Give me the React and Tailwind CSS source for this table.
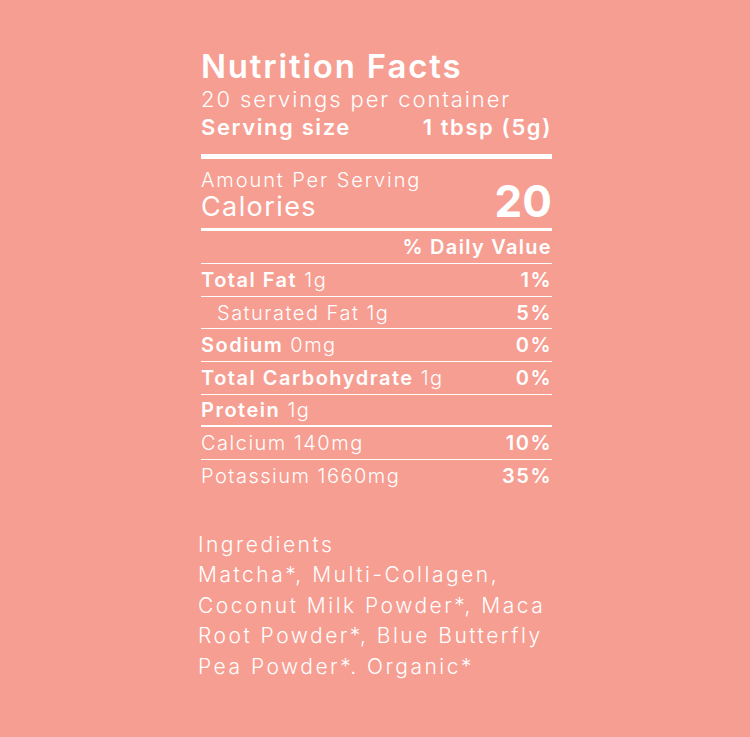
// Nutrition facts label on a salmon panel.

const rows = [
  { bold: 'Total Fat', rest: ' 1g', dv: '1%' },
  { bold: '', rest: 'Saturated Fat 1g', dv: '5%', indent: true },
  { bold: 'Sodium', rest: ' 0mg', dv: '0%' },
  { bold: 'Total Carbohydrate', rest: ' 1g', dv: '0%' },
  { bold: 'Protein', rest: ' 1g', dv: '', thick: true },
  { bold: '', rest: 'Calcium 140mg', dv: '10%' },
  { bold: '', rest: 'Potassium 1660mg', dv: '35%', last: true },
];

export default function App() {
  return (
    <div className="min-h-[737px] w-[750px] bg-[#f69e92] text-white font-['Inter',sans-serif]">
      <div className="pl-[201px] pt-[46px]">
        <div className="w-[351px]">
          <h1 className="text-[33px] leading-[40px] font-semibold tracking-[1.8px]">Nutrition Facts</h1>
          <div className="text-[22px] leading-[26px] font-light tracking-[1.9px]">20 servings per container</div>
          <div className="flex justify-between text-[22px] leading-[30px] font-semibold tracking-[1.6px]">
            <span>Serving size</span>
            <span>1 tbsp (5g)</span>
          </div>
          <div className="h-[5px] bg-white mt-[12px]" />

          <div className="flex justify-between items-end pt-[10px] pb-[5px]">
            <div>
              <div className="text-[20px] leading-[22px] font-light tracking-[1.9px]">Amount Per Serving</div>
              <div className="text-[27px] leading-[32px] font-normal tracking-[1.4px]">Calories</div>
            </div>
            <div className="text-[44px] leading-[44px] font-bold">20</div>
          </div>
          <div className="h-[3px] bg-white" />

          <div className="h-[33px] flex items-center justify-end text-[20px] font-semibold tracking-[1.3px] border-b border-white">
            % Daily Value
          </div>
          {rows.map((r, i) => (
            <div
              key={i}
              className={`h-[32.7px] flex items-center justify-between text-[20px] tracking-[1.5px] ${
                r.last ? '' : r.thick ? 'border-b-2 border-white' : 'border-b border-white'
              }`}
            >
              <span className={r.indent ? 'pl-[16px]' : ''}>
                {r.bold && <span className="font-semibold">{r.bold}</span>}
                <span className="font-light">{r.rest}</span>
              </span>
              <span className="font-semibold">{r.dv}</span>
            </div>
          ))}
        </div>

        <div className="-ml-[3px] mt-[37px] w-[358px] text-[21px] leading-[30.5px] tracking-[2.5px] font-light">
          <div>Ingredients</div>
          <div>
            Matcha*, Multi-Collagen, Coconut Milk Powder*, Maca Root Powder*, Blue Butterfly Pea Powder*. Organic*
          </div>
        </div>
      </div>
    </div>
  );
}
